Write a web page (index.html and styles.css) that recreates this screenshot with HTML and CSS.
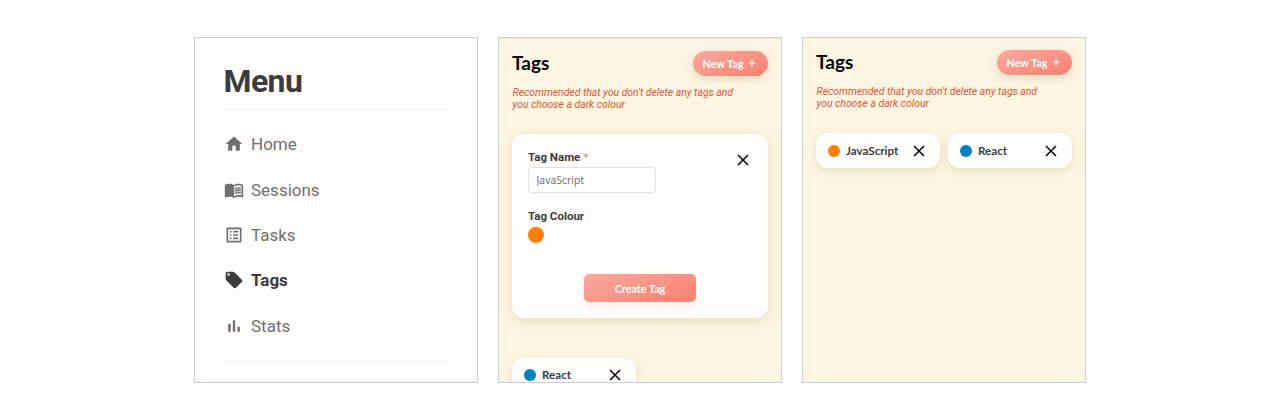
FILE: index.html
```html
<!DOCTYPE html>
<html lang="en">
<head>
<meta charset="utf-8">
<title>Tags</title>
<link rel="stylesheet" href="styles.css">
</head>
<body>
<main class="board">
  <section class="panel menu">
    <h1 class="menu-title">Menu</h1>
    <nav class="menu-list">
      <a class="menu-item"><svg class="menu-icon" viewBox="0 0 24 24"><path d="M10 20v-6h4v6h5v-8h3L12 3 2 12h3v8z"/></svg><span>Home</span></a>
      <a class="menu-item"><svg class="menu-icon" viewBox="0 0 24 24"><path d="M21 5c-1.11-.35-2.33-.5-3.5-.5-1.95 0-4.05.4-5.5 1.5-1.45-1.1-3.55-1.5-5.500-1.500S2.450 4.900 1 6v14.650c0 .25.25.5.5.5.1 0 .15-.05.25-.05C3.100 20.450 5.050 20 6.500 20c1.950 0 4.050.4 5.500 1.500 1.350-.85 3.800-1.500 5.500-1.500 1.650 0 3.350.3 4.750 1.050.1.05.15.05.25.05.25 0 .5-.25.5-.5V6c-.6-.45-1.250-.75-2-1zm0 13.500c-1.100-.35-2.300-.5-3.500-.5-1.700 0-4.150.65-5.500 1.500V8c1.350-.85 3.800-1.500 5.500-1.500 1.200 0 2.400.15 3.500.5v11.500z"/><path class="page-lines" d="M17.500 10.500c.88 0 1.730.09 2.500.26V9.240c-.79-.15-1.640-.24-2.500-.24-1.700 0-3.240.29-4.500.83v1.660c1.130-.64 2.700-.99 4.500-.99zM13 12.490v1.660c1.130-.64 2.700-.99 4.500-.99.88 0 1.730.09 2.500.26V11.900c-.79-.15-1.640-.24-2.500-.24-1.700 0-3.240.3-4.500.83zM17.500 14.330c-1.700 0-3.240.29-4.500.83v1.660c1.130-.64 2.700-.99 4.500-.99.88 0 1.730.09 2.500.26v-1.520c-.79-.16-1.640-.24-2.500-.24z"/></svg><span>Sessions</span></a>
      <a class="menu-item"><svg class="menu-icon" viewBox="0 0 24 24"><path d="M19 5v14H5V5h14m1.100-2H3.900c-.5 0-.9.4-.9.9v16.200c0 .4.4.9.9.9h16.200c.4 0 .9-.5.9-.9V3.900c0-.5-.5-.9-.9-.9zM11 7h6v2h-6V7zm0 4h6v2h-6v-2zm0 4h6v2h-6zM7 7h2v2H7zm0 4h2v2H7zm0 4h2v2H7z"/></svg><span>Tasks</span></a>
      <a class="menu-item menu-item-active"><svg class="menu-icon" viewBox="0 0 24 24"><path d="M21.410 11.580l-9-9C12.050 2.220 11.550 2 11 2H4c-1.100 0-2 .9-2 2v7c0 .55.22 1.050.59 1.420l9 9c.36.36.86.58 1.410.58.55 0 1.050-.22 1.410-.59l7-7c.37-.36.59-.86.59-1.410 0-.55-.23-1.060-.59-1.420zM5.500 7C4.670 7 4 6.330 4 5.500S4.670 4 5.500 4 7 4.670 7 5.500 6.330 7 5.500 7z"/></svg><span>Tags</span></a>
      <a class="menu-item"><svg class="menu-icon" viewBox="0 0 24 24"><path d="M5 9.200h3V19H5zM10.600 5h2.800v14h-2.800zm5.600 8H19v6h-2.800z"/></svg><span>Stats</span></a>
    </nav>
  </section>

  <section class="panel tags tags-editing">
    <header class="tags-head">
      <h2 class="tags-title">Tags</h2>
      <button class="new-tag">New Tag <svg class="plus" viewBox="0 0 8 8"><path d="M4 .5v7M.5 4h7"/></svg></button>
    </header>
    <p class="hint">Recommended that you don't delete any tags and<br>you choose a dark colour</p>
    <form class="tag-form">
      <div class="form-top">
        <label class="label" for="tag-name">Tag Name <span class="required">*</span></label>
        <svg class="close" viewBox="0 0 12 12"><path d="M1 1l10 10M11 1L1 11"/></svg>
      </div>
      <input class="field" id="tag-name" type="text" placeholder="JavaScript">
      <div class="label label-colour">Tag Colour</div>
      <span class="swatch orange"></span>
      <button class="create" type="button">Create Tag</button>
    </form>
    <div class="tag-grid">
      <div class="tag-card"><span class="dot blue"></span><span class="tag-name">React</span><svg class="close" viewBox="0 0 12 12"><path d="M1 1l10 10M11 1L1 11"/></svg></div>
    </div>
  </section>

  <section class="panel tags">
    <header class="tags-head">
      <h2 class="tags-title">Tags</h2>
      <button class="new-tag">New Tag <svg class="plus" viewBox="0 0 8 8"><path d="M4 .5v7M.5 4h7"/></svg></button>
    </header>
    <p class="hint">Recommended that you don't delete any tags and<br>you choose a dark colour</p>
    <div class="tag-grid">
      <div class="tag-card"><span class="dot orange"></span><span class="tag-name">JavaScript</span><svg class="close" viewBox="0 0 12 12"><path d="M1 1l10 10M11 1L1 11"/></svg></div>
      <div class="tag-card"><span class="dot blue"></span><span class="tag-name">React</span><svg class="close" viewBox="0 0 12 12"><path d="M1 1l10 10M11 1L1 11"/></svg></div>
    </div>
  </section>
</main>
</body>
</html>
```
FILE: styles.css
```css
* { box-sizing: border-box; }
body { margin: 0; background: #fff; font-family: Roboto, sans-serif; color: #3c3c3c; }
h1, h2, p { margin: 0; }
button { border: 0; font-family: Lato, sans-serif; font-weight: 700; color: #fff; padding: 0; }

.board { display: flex; justify-content: center; gap: 20px; padding-top: 37px; height: 420px; overflow: hidden; }
.panel { width: 284px; height: 346px; border: 1px solid #cecece; overflow: hidden; }

.menu { background: #fffefc; padding: 24px 29px 0; }
.menu-title { font-size: 32px; letter-spacing: -.6px; text-indent: -.5px; line-height: 38px; font-weight: 700; padding-bottom: 9px; border-bottom: 1px solid #f2f2f1; }
.menu-list { display: flex; flex-direction: column; gap: 25.400px; padding: 24.300px 0 25.100px; border-bottom: 1px solid #f2f2f1; }
.menu-item { display: flex; align-items: center; gap: 7.300px; height: 20px; font-size: 17px; color: #707070; }
.menu-item-active { color: #3c3c3c; font-weight: 700; }
.menu-icon { width: 20px; height: 20px; margin-left: -.3px; fill: currentColor; }
.page-lines { stroke: currentColor; stroke-width: .4; }

.tags { background: #fdf6e3; padding: 11.300px 13px 0; }
.tags-editing { padding-top: 12.300px; box-shadow: inset 0 1px #f1eee7; }
.tags-head { display: flex; justify-content: space-between; align-items: center; height: 26px; }
.tags-title { font: 700 19px/26px Lato, sans-serif; color: #060606; }
.new-tag { display: flex; align-items: center; gap: 4px; padding-left: 10px; width: 75.500px; height: 25.500px; border-radius: 13px; font-size: 10.800px; background: linear-gradient(160deg, #f8aaa0, #fb806f); box-shadow: 0 3px 8px rgba(120, 90, 50, .2); }
.plus { width: 8px; height: 8px; stroke: #fff; stroke-width: 1.200; fill: none; }
.hint { margin-top: 10.700px; padding-left: .5px; font-size: 10.400px; line-height: 12px; font-style: italic; color: #e2552b; white-space: nowrap; }

.tag-form { display: flex; flex-direction: column; align-items: flex-start; height: 184px; margin-top: 23.300px; padding: 16px; background: #fffefc; border-radius: 12px; box-shadow: 0 3px 12px rgba(120, 90, 30, .16); }
.form-top { display: flex; justify-content: space-between; align-items: center; width: 100%; height: 14px; padding-right: 3.500px; }
.form-top .close { margin-top: 4.500px; }
.label { font-size: 11.500px; line-height: 14px; font-weight: 700; }
.required { color: #fb8072; font-weight: 400; }
.field { width: 128px; height: 26px; margin-top: 3px; padding: 0 7.500px; border: 1px solid #e1e2e5; border-radius: 4px; background: #fff; font: 10.400px "Noto Sans", sans-serif; }
.field::placeholder { color: #757575; }
.label-colour { margin-top: 16px; }
.swatch { width: 16px; height: 16px; margin-top: 3.500px; border-radius: 50%; }
.create { align-self: center; width: 112px; height: 28px; margin-top: 31.500px; border-radius: 5px; font-size: 10.800px; background: linear-gradient(160deg, #f8aaa0, #fb806f); box-shadow: 0 6px 14px rgba(250, 128, 114, .13); }

.tag-grid { display: grid; grid-template-columns: 124px 124px; gap: 8px; margin-top: 23.500px; }
.tags-editing .tag-grid { margin-top: 39.500px; }
.tag-card { display: flex; align-items: center; height: 34.600px; padding: 0 15.300px 0 12px; border-radius: 12px; background: #fffefc; box-shadow: 0 3px 10px rgba(120, 90, 30, .15); }
.dot { width: 12px; height: 12px; margin-right: 6px; border-radius: 50%; }
.tag-name { flex: 1; font: 700 11.600px/14px Lato, sans-serif; }
.close { width: 12px; height: 12px; stroke: #0b0b0b; stroke-width: 1.600; fill: none; flex: none; }
.orange { background: #ff8000; }
.blue { background: #0080c4; }
```
